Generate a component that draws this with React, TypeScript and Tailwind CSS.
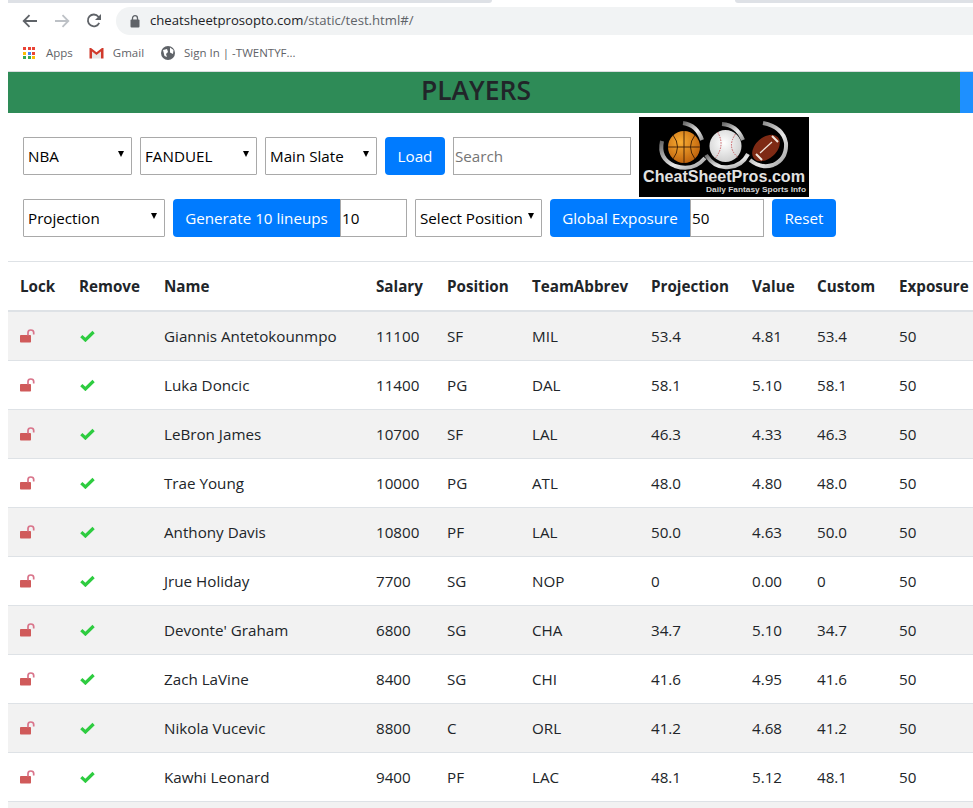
import React from "react";

const players: [string, string, string, string, string, string, string][] = [
  ["Giannis Antetokounmpo", "11100", "SF", "MIL", "53.4", "4.81", "53.4"],
  ["Luka Doncic", "11400", "PG", "DAL", "58.1", "5.10", "58.1"],
  ["LeBron James", "10700", "SF", "LAL", "46.3", "4.33", "46.3"],
  ["Trae Young", "10000", "PG", "ATL", "48.0", "4.80", "48.0"],
  ["Anthony Davis", "10800", "PF", "LAL", "50.0", "4.63", "50.0"],
  ["Jrue Holiday", "7700", "SG", "NOP", "0", "0.00", "0"],
  ["Devonte' Graham", "6800", "SG", "CHA", "34.7", "5.10", "34.7"],
  ["Zach LaVine", "8400", "SG", "CHI", "41.6", "4.95", "41.6"],
  ["Nikola Vucevic", "8800", "C", "ORL", "41.2", "4.68", "41.2"],
  ["Kawhi Leonard", "9400", "PF", "LAC", "48.1", "5.12", "48.1"],
];

const gridCols = "grid grid-cols-[59px_85px_212px_71px_85px_119px_101px_65px_82px_100px]";

function Caret() {
  return <span className="absolute right-[7px] top-1/2 -translate-y-[5px] w-0 h-0 border-x-[3.5px] border-x-transparent border-t-[6px] border-t-black" />;
}

function Select({ label, w }: { label: string; w: string }) {
  return (
    <div className={`relative h-[38px] ${w} shrink-0 border border-[#a9a9a9] rounded-[1px] flex items-center pl-[4px] pt-[1px] text-[15.2px] text-black bg-white`}>
      <span className="whitespace-nowrap">{label}</span>
      <Caret />
    </div>
  );
}

function Btn({ label, w, cls }: { label: string; w: string; cls: string }) {
  return (
    <div className={`h-[38px] ${w} shrink-0 bg-[#007bff] text-white text-[15.2px] flex items-center justify-center whitespace-nowrap ${cls}`}>{label}</div>
  );
}

function Input({ value, w, placeholder }: { value?: string; w: string; placeholder?: string }) {
  return (
    <div className={`h-[38px] ${w} shrink-0 border border-[#a9a9a9] flex items-center pl-[1px] text-[15.2px] bg-white ${placeholder ? "text-[#757575]" : "text-black"}`}>
      {value ?? placeholder}
    </div>
  );
}

function LockIcon() {
  return (
    <svg width="16" height="14" viewBox="0 0 16 14" className="block">
      <rect x="0" y="6" width="11" height="7.500" rx="0.8" fill="#d05a5a" />
      <path d="M8 6.500V3.600C8 2 9.200 1 10.800 1s2.900 1 2.900 2.600V5.400" fill="none" stroke="#d9748a" strokeWidth="1.700" />
    </svg>
  );
}

function CheckIcon() {
  return (
    <svg width="15" height="12" viewBox="0 0 15 12" className="block ml-[1px]">
      <path d="M1.300 6.200 5.400 10 13.600 2" fill="none" stroke="#2ecc40" strokeWidth="3.200" />
    </svg>
  );
}

function Logo() {
  return (
    <div className="w-[170px] h-[80px] shrink-0 bg-black">
      <svg width="170" height="80" viewBox="0 0 170 80" className="block">
        <defs>
          <radialGradient id="bb" cx="0.4" cy="0.35" r="0.75">
            <stop offset="0" stopColor="#f9ad33" />
            <stop offset="1" stopColor="#b85a08" />
          </radialGradient>
          <radialGradient id="base" cx="0.45" cy="0.4" r="0.7">
            <stop offset="0" stopColor="#ffffff" />
            <stop offset="1" stopColor="#c8c8c8" />
          </radialGradient>
          <linearGradient id="ring" x1="0" y1="0" x2="1" y2="1">
            <stop offset="0" stopColor="#666" />
            <stop offset="0.6" stopColor="#e8e8e8" />
            <stop offset="1" stopColor="#999" />
          </linearGradient>
        </defs>
        <path d="M44 6Q58 8 63 23" fill="none" stroke="url(#ring)" strokeWidth="4" />
        <path d="M23 24Q19 42 36 49Q54 55 66 41" fill="none" stroke="url(#ring)" strokeWidth="4" />
        <path d="M83 7Q98 8 104 23" fill="none" stroke="url(#ring)" strokeWidth="4" />
        <path d="M67 38Q76 52 90 50Q103 49 109 37" fill="none" stroke="url(#ring)" strokeWidth="4" />
        <path d="M124 6Q144 10 147 26Q148 42 134 48Q122 52 111 43" fill="none" stroke="url(#ring)" strokeWidth="4" />
        <circle cx="45" cy="30" r="16" fill="url(#bb)" />
        <path d="M29 30H61M45 14V46M34 18Q43 30 34 42M56 18Q47 30 56 42" fill="none" stroke="#3a1c05" strokeWidth="0.900" />
        <circle cx="86.500" cy="29" r="16" fill="url(#base)" />
        <path d="M78.500 15Q86.500 28 76.500 41M96.500 17Q87.500 30 98.500 40" fill="none" stroke="#c9595f" strokeWidth="1" strokeDasharray="1.500 1.200" />
        <ellipse cx="127" cy="31" rx="16" ry="10.500" transform="rotate(-42 127 31)" fill="#7e2a14" />
        <path d="M117 37 123 43M133 19 139 25" stroke="#f1e6dc" strokeWidth="2" />
        <path d="M121 36 133 25" stroke="#f1e6dc" strokeWidth="1.200" />
        <text x="4" y="65" fontFamily="'Liberation Sans', sans-serif" fontWeight="700" fontSize="16" fill="#e2e2e2" textLength="162" lengthAdjust="spacingAndGlyphs">CheatSheetPros.com</text>
        <text x="67" y="74.500" fontFamily="'Liberation Sans', sans-serif" fontWeight="700" fontSize="6.500" fill="#d5d5d5" textLength="100" lengthAdjust="spacingAndGlyphs">Daily Fantasy Sports Info</text>
      </svg>
    </div>
  );
}

function AppsIcon() {
  const c = ["#ea4335", "#ea4335", "#ea4335", "#fbbc05", "#4285f4", "#ea4335", "#34a853", "#34a853", "#fbbc05"];
  return (
    <div className="grid grid-cols-[3px_3px_3px] gap-[1.5px] w-[13px] shrink-0">
      {c.map((col, i) => (
        <span key={i} className="h-[3px] block" style={{ background: col }} />
      ))}
    </div>
  );
}

export default function App() {
  return (
    <div className="w-[973px] h-[808px] overflow-hidden bg-white font-['Open_Sans','Noto_Sans',sans-serif] text-[#212529]">
      {/* Browser chrome */}
      <div className="h-[3px] flex bg-white">
        <div className="ml-[8px] w-[484px] bg-[#dee1e6] rounded-br-[6px]" />
        <div className="ml-[243px] flex-1 bg-[#dee1e6] rounded-bl-[6px]" />
      </div>
      <div className="h-[32px] flex items-center pt-[4px] pl-[22px]">
        <svg width="16" height="14" viewBox="0 0 16 14" className="shrink-0">
          <path d="M15 7H2M7.500 1.200 1.700 7l5.800 5.800" fill="none" stroke="#5f6368" strokeWidth="1.800" />
        </svg>
        <svg width="16" height="14" viewBox="0 0 16 14" className="shrink-0 ml-[16px]">
          <path d="M1 7h13M8.500 1.200 14.300 7l-5.800 5.800" fill="none" stroke="#bdc1c6" strokeWidth="1.800" />
        </svg>
        <svg width="16" height="16" viewBox="0 0 16 16" className="shrink-0 ml-[16px]">
          <path d="M13.200 9.800A5.900 5.900 0 1 1 12.400 3.700L14.200 5.600" fill="none" stroke="#5f6368" strokeWidth="1.800" />
          <path d="M15 1v6H9z" fill="#5f6368" />
        </svg>
        <div className="ml-[14px] flex-1 h-[28px] bg-[#f1f3f4] rounded-l-[14px] flex items-center pl-[14px]">
          <svg width="10" height="13" viewBox="0 0 10 13" className="shrink-0">
            <rect x="0.500" y="4.500" width="9" height="8" rx="1" fill="#5f6368" />
            <path d="M2.500 5V3.200a2.500 2.500 0 0 1 5 0V5" fill="none" stroke="#5f6368" strokeWidth="1.300" />
          </svg>
          <span className="ml-[10px] text-[13.15px] text-[#202124] whitespace-nowrap">
            cheatsheetprosopto.com<span className="text-[#5f6368]">/static/test.html#/</span>
          </span>
        </div>
      </div>
      <div className="h-[36px] flex items-center pl-[23px] text-[11.5px] text-[#5f6368] whitespace-nowrap">
        <AppsIcon />
        <span className="ml-[10px]">Apps</span>
        <svg width="15" height="12" viewBox="0 0 15 12" className="ml-[16px] shrink-0">
          <path d="M3 4.500V11.500H12V4.500L7.500 8Z" fill="#e6e6e6" />
          <path d="M0.500 1V11.500H3V4.500L7.500 8 12 4.500V11.500H14.500V1H13L7.500 5.200 2 1Z" fill="#d0392b" />
        </svg>
        <span className="ml-[9px]">Gmail</span>
        <svg width="14" height="14" viewBox="0 0 14 14" className="ml-[17px] shrink-0">
          <circle cx="7" cy="7" r="7" fill="#5f6368" />
          <path d="M2 4 6 3 7 6 5 8 6 11 3.500 10ZM9 1.500 12.500 4 12 8 9 6.500Z" fill="#fff" />
        </svg>
        <span className="ml-[9px]">Sign In | -TWENTYF...</span>
      </div>
      {/* Page */}
      <div className="pl-[8px]">
        <div className="h-[42px] border-t border-t-[#dadce0] flex bg-[#2e8b57]">
          <div className="flex-1 flex items-center justify-center pr-[16px] pb-[5px] text-[26.5px] leading-none font-semibold text-[#212529]">PLAYERS</div>
          <div className="w-[13px] bg-[#1e90ff]" />
        </div>
        <div className="pl-[15px] pt-[4px] flex flex-col">
          <div className="flex items-start h-[82px]">
            <div className="flex items-center gap-[8px] mt-[20px]">
              <Select label="NBA" w="w-[109px]" />
              <Select label="FANDUEL" w="w-[117px]" />
              <Select label="Main Slate" w="w-[112px]" />
              <Btn label="Load" w="w-[60px]" cls="rounded-[4px]" />
              <Input placeholder="Search" w="w-[178px]" />
            </div>
            <div className="ml-[8px]"><Logo /></div>
          </div>
          <div className="flex items-center h-[38px]">
            <Select label="Projection" w="w-[142px]" />
            <Btn label="Generate 10 lineups" w="w-[167px]" cls="rounded-l-[4px] ml-[8px]" />
            <Input value="10" w="w-[67px]" />
            <Select label="Select Position" w="w-[127px] ml-[8px]" />
            <Btn label="Global Exposure" w="w-[140px]" cls="rounded-l-[4px] ml-[8px]" />
            <Input value="50" w="w-[74px]" />
            <Btn label="Reset" w="w-[64px]" cls="rounded-[4px] ml-[8px]" />
          </div>
        </div>
        {/* Table */}
        <div className="mt-[24px] border-t border-t-[#dee2e6] w-[1000px] text-[15.2px]">
          <div className={`${gridCols} h-[50px] items-center border-b-2 border-b-[#dee2e6] font-bold text-[#212529] pl-[12px]`}>
            {["Lock", "Remove", "Name", "Salary", "Position", "TeamAbbrev", "Projection", "Value", "Custom", "Exposure"].map((h) => (
              <div key={h} className="whitespace-nowrap">{h}</div>
            ))}
          </div>
          {players.map((p, i) => (
            <div key={p[0]} className={`${gridCols} h-[49px] items-center border-b border-b-[#dee2e6] pl-[12px] ${i % 2 === 0 ? "bg-[#f2f2f2]" : "bg-white"}`}>
              <div><LockIcon /></div>
              <div><CheckIcon /></div>
              {p.map((v, j) => (
                <div key={j} className="whitespace-nowrap">{v}</div>
              ))}
              <div>50</div>
            </div>
          ))}
          <div className="h-[49px] bg-[#f2f2f2]" />
        </div>
      </div>
    </div>
  );
}
